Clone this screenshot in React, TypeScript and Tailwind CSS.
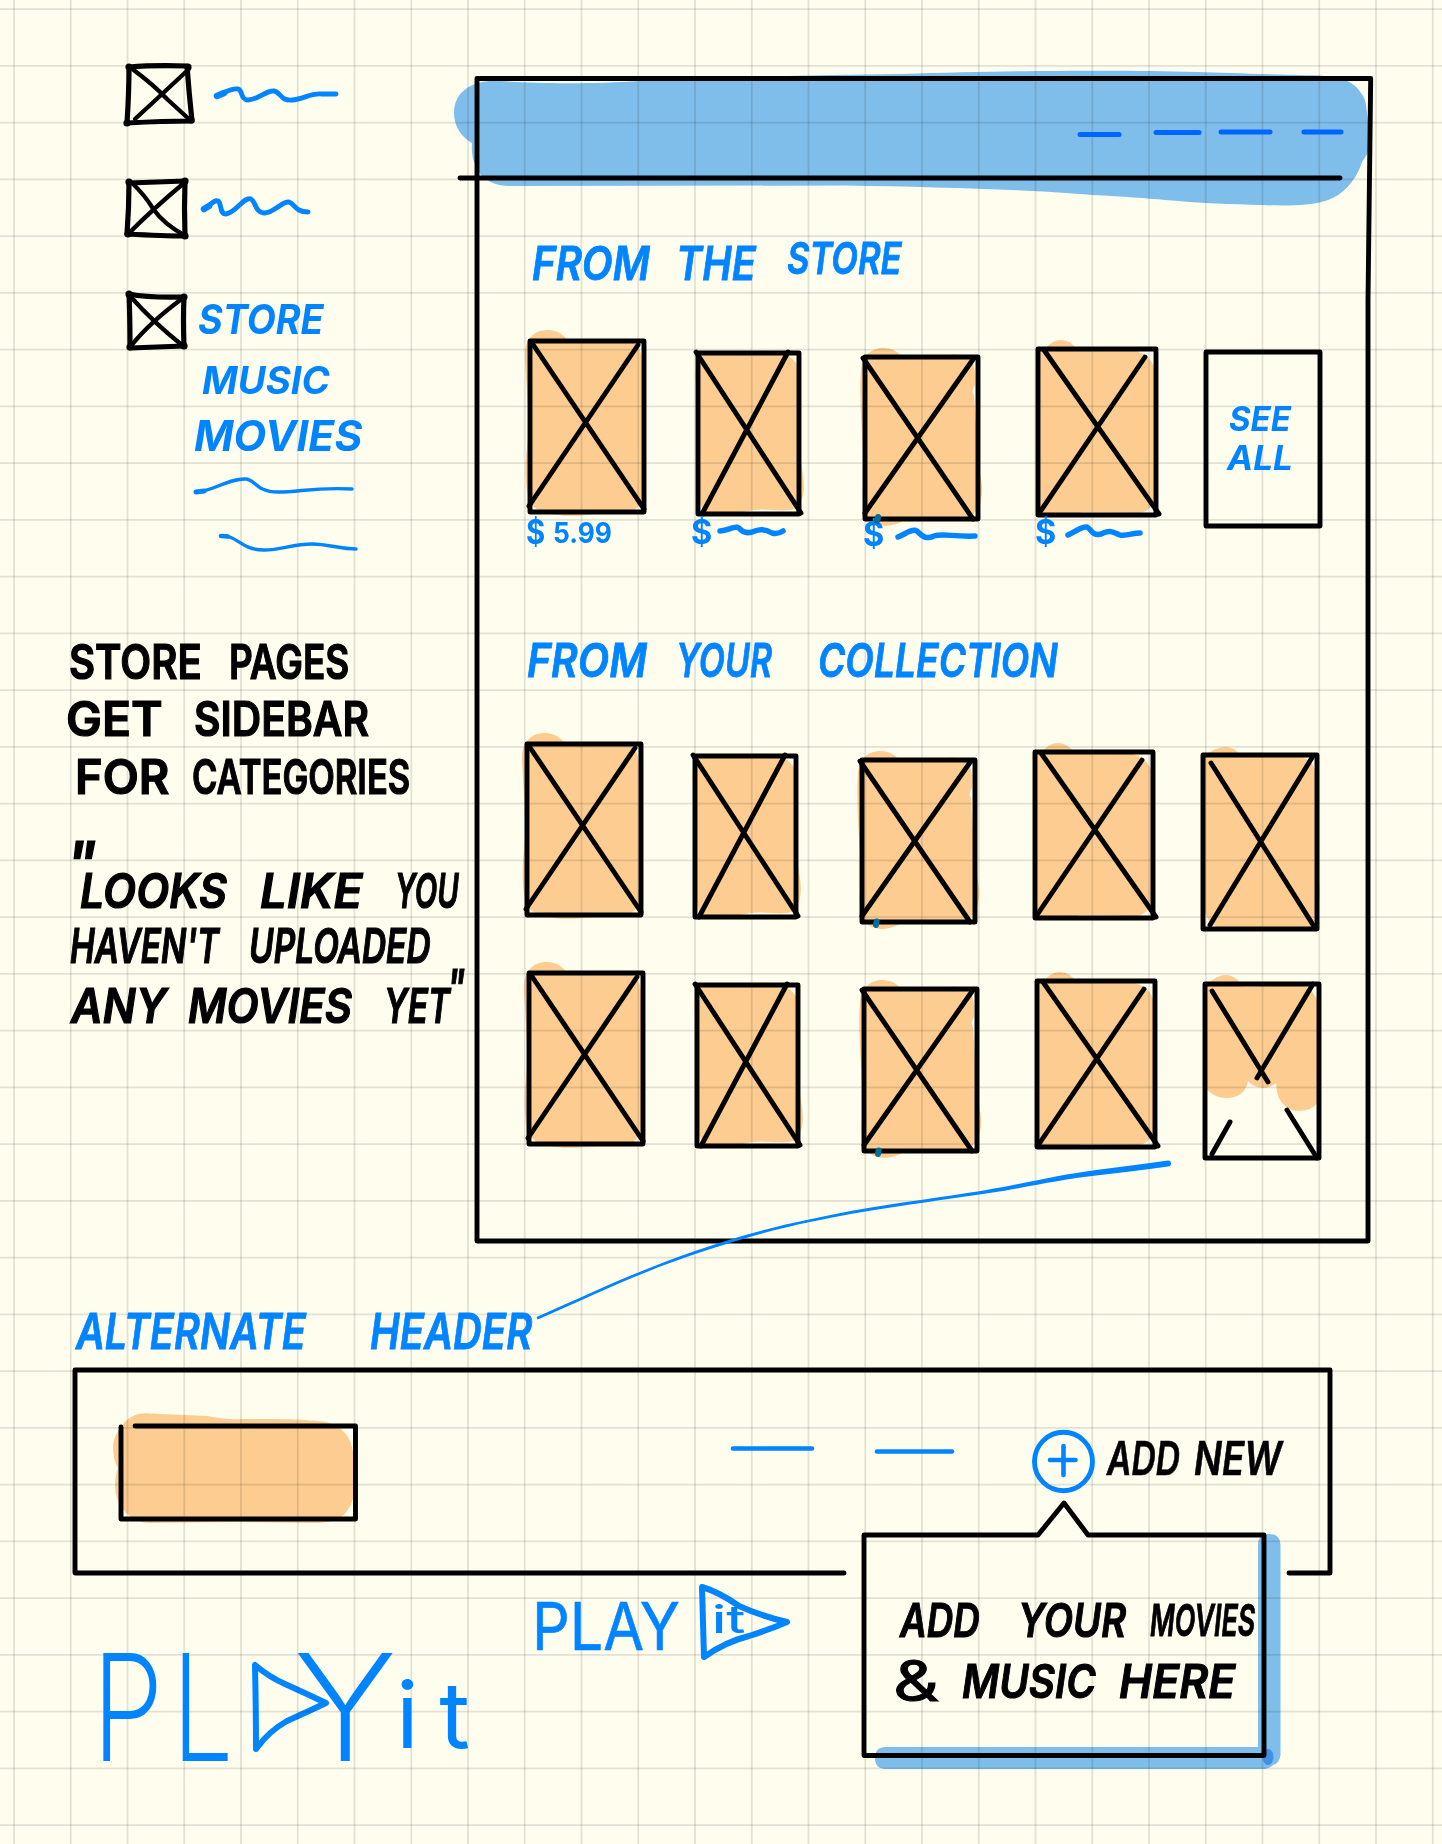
import React, { useLayoutEffect, useRef, useState } from 'react';

/** A handwritten word: the text is stretched to the width of its box. */
function Word({ children, className = '' }: { children: string; className?: string }) {
  const box = useRef<HTMLSpanElement>(null);
  const ink = useRef<HTMLSpanElement>(null);
  const [scale, setScale] = useState(1);
  useLayoutEffect(() => {
    if (box.current && ink.current) setScale(box.current.offsetWidth / ink.current.offsetWidth);
  }, []);
  return (
    <span ref={box} className={'block shrink-0 leading-none ' + className}>
      <span ref={ink} className="inline-block origin-left whitespace-nowrap" style={{ transform: `scaleX(${scale})` }}>
        {children}
      </span>
    </span>
  );
}

function Line({ children, className = '' }: { children: React.ReactNode; className?: string }) {
  return <div className={'flex items-center ' + className}>{children}</div>;
}

/** Round-capped pen strokes. */
function Strokes({ d, w = 4.9, className = 'stroke-black' }: { d: string; w?: number; className?: string }) {
  return <path d={d} fill="none" strokeWidth={w} strokeLinecap="round" strokeLinejoin="round" className={className} />;
}

const BLUE = 'stroke-[#0084ff]';

function GridPaper() {
  return (
    <svg className="pointer-events-none absolute inset-0 h-full w-full" aria-hidden="true">
      {Array.from({ length: 26 }, (_, i) => (
        <line key={i} x1={14 + i * 56.75} x2={14 + i * 56.75} y1={0} y2={1844} stroke="#000" strokeOpacity={0.11} strokeWidth={1.8} />
      ))}
      {Array.from({ length: 33 }, (_, i) => (
        <line key={i} x1={0} x2={1442} y1={9.2 + i * 56.75} y2={9.2 + i * 56.75} stroke="#000" strokeOpacity={0.11} strokeWidth={1.8} />
      ))}
    </svg>
  );
}

const CHECKS = [
  {
    box: 'M5 4Q30 2 63 3Q65 30 68 58Q40 58 3 60Q5 30 5 4Z',
    cross: 'M7 5Q30 22 43 36Q54 46 66 57M65 6Q35 34 11 56',
    dots: [[5, 4], [64, 4], [67, 57], [3, 60]],
  },
  {
    box: 'M5 5Q30 4 61 3Q60 30 61 58Q40 58 3 56Q5 30 5 5Z',
    cross: 'M8 5Q20 16 30 32Q40 46 60 57M60 5Q30 30 4 56',
    dots: [[5, 4], [61, 3], [61, 58], [4, 56]],
  },
  {
    box: 'M5 1Q25 5 60 4Q59 25 60 53Q35 54 6 55Q6 25 5 1Z',
    cross: 'M6 3Q30 30 58 52M59 5Q25 30 7 53',
    dots: [[5, 1], [60, 4], [60, 53], [6, 54]],
  },
];

function Check({ index }: { index: number }) {
  const c = CHECKS[index];
  return (
    <svg width={66} height={56} className="block shrink-0 overflow-visible">
      <Strokes d={c.box} w={5.2} />
      <Strokes d={c.cross} w={4.3} />
      {c.dots.map(([x, y], i) => (
        <circle key={i} cx={x} cy={y} r={3.6} />
      ))}
    </svg>
  );
}

type CardShape = { w: number; h: number; fill: string; cross: string; offset: string };

const CARDS: CardShape[] = [
  {
    w: 114, h: 171, offset: 'mt-0',
    fill: 'M-5 14C-5 -3 5 -11 18 -11C28 -11 34 -6 38 0L102 1Q112 6 112 22L112 158Q109 167 101 171C70 171 48 177 28 174C8 171 0 168 -3 150C-6 125 -3 110 -2 95C-1 60 -5 30 -5 14Z',
    cross: 'M2 2L114 168M108 4L-1 165',
  },
  {
    w: 101, h: 161, offset: 'mt-[12px]',
    fill: 'M0 2L45 0C58 -3 76 -3 86 0Q101 8 103 22L103 110C105 122 107 130 105 142Q102 156 92 157C76 159 66 153 42 160L10 160Q2 158 2 145L0 40Q-5 22 0 2Z',
    cross: 'M-2 -1L103 160M90 -1L4 161',
  },
  {
    w: 113, h: 162, offset: 'mt-[16px]',
    fill: 'M-4 12C-2 -3 8 -9 18 -9C28 -9 33 -5 37 0L75 0Q90 -5 103 0Q112 8 110 28Q106 34 109 38Q112 80 113 110C118 125 119 140 113 152L104 162L42 162Q30 169 20 169Q8 168 3 162Q-4 150 -2 130C0 90 -7 50 -4 12Z',
    cross: 'M-2 1L108 162M109 1L0 156',
  },
  {
    w: 118, h: 166, offset: 'mt-[8px]',
    fill: 'M1 2L7 0Q14 -9 23 -9Q33 -9 39 1L98 2Q112 6 116 18L116 150Q112 164 100 164L45 163Q25 170 12 167L1 164Z',
    cross: 'M6 1L121 165M107 8L2 163',
  },
  {
    w: 114, h: 174, offset: 'mt-[11px]',
    fill: 'M0 2Q12 -8 22 -8Q32 -8 37 0L100 2Q112 8 113 20L114 115Q119 135 115 155Q112 171 104 174L20 174Q2 170 1 150L0 2Z',
    cross: 'M8 8L112 173M110 1L7 170',
  },
];

const PARTIAL: CardShape = {
  ...CARDS[4],
  fill: 'M0 2Q12 -9 20 -9Q30 -9 36 0L40 3L98 1Q110 6 113 20L113 118Q107 127 93 127Q72 125 71 99Q65 104 58 104Q48 103 43 97Q40 114 21 114Q10 114 1 105Z',
  cross: 'M7 7L63 98M108 0L52 94M25 138L7 170M82 126L112 174',
};

function Card({ shape, marked = false }: { shape: CardShape; marked?: boolean }) {
  const { w, h, fill, cross, offset } = shape;
  return (
    <svg width={w} height={h} className={'block overflow-visible ' + offset}>
      <path d={fill} className="fill-[#fcce9b] mix-blend-multiply" />
      <Strokes d={`M0 0H${w}V${h}H0Z`} />
      <Strokes d={cross} />
      {marked && <Strokes d={`M14.5 ${h - 0.5}L14 ${h + 3}`} w={6} className="stroke-[#006f9b]" />}
    </svg>
  );
}

function CardRow({ className, children }: { className: string; children: React.ReactNode }) {
  return (
    <div className={'grid h-[171px] grid-cols-[167.5px_167px_173px_168px_114px] items-start ' + className}>{children}</div>
  );
}

function Price({ squiggle, className = '' }: { squiggle: string; className?: string }) {
  return (
    <div className={'flex h-9 items-center ' + className}>
      <Word className="w-[21px] text-[34px] font-bold">$</Word>
      <svg width={80} height={20} className="block overflow-visible">
        <Strokes d={squiggle} w={5.5} className={BLUE} />
      </svg>
    </div>
  );
}

function Sidebar() {
  return (
    <aside className="h-[1241px] w-[477px] shrink-0 pt-[63px]">
      <Line className="h-14 pl-[124px]">
        <Check index={0} />
        <svg width={130} height={20} className="ml-[22px] block overflow-visible">
          <Strokes d="M5 15C13 12 18 7 26 8C31 9 28 19 36 19C46 19 54 9 62 10C69 11 68 20 80 19C92 18 98 12 110 13H124" className={BLUE} />
          <Strokes d="M5 15L12 12" w={6.5} className={BLUE} />
        </svg>
      </Line>
      <Line className="mt-[59px] h-14 pl-[124px]">
        <Check index={1} />
        <svg width={130} height={24} className="ml-3 block overflow-visible">
          <Strokes d="M2 15C8 12 12 5 16 7C20 9 17 20 24 20C34 19 42 2 49 5C54 8 53 19 63 19C73 18 80 7 87 8C93 10 93 18 106 18" className={BLUE} />
          <Strokes d="M2 15L7 12" w={6.5} className={BLUE} />
        </svg>
      </Line>
      <Line className="mt-[59px] h-14 pl-[124px] text-[#0084ff]">
        <Check index={2} />
        <Word className="-mt-1 ml-[8px] w-[126px] text-[41px] font-bold italic">STORE</Word>
      </Line>
      <Line className="mt-[2px] h-[58px] pl-[202px] text-[#0084ff]">
        <Word className="w-[128px] text-[38px] font-bold italic">MUSIC</Word>
      </Line>
      <Line className="-mt-[2px] h-[58px] pl-[194px] text-[#0084ff]">
        <Word className="w-[168px] text-[42px] font-bold italic">MOVIES</Word>
      </Line>
      <svg width={180} height={80} className="ml-[190px] mt-[9px] block overflow-visible">
        <Strokes d="M6 18C22 18 38 4 56 5C66 6 66 18 88 18C110 18 125 13 162 15" w={3.4} className={BLUE} />
        <Strokes d="M6 18L14 17" w={5} className={BLUE} />
        <Strokes d="M31 62C48 61 50 76 74 76C92 76 102 70 122 70C138 70 150 75 166 75" w={3.4} className={BLUE} />
        <Strokes d="M31 62L38 62.500" w={4.6} className={BLUE} />
      </svg>
      <div className="mt-[79px] text-[48px] font-semibold [-webkit-text-stroke:1.2px_currentColor]">
        <Line className="h-[57.5px] pl-[69px]">
          <Word className="w-[133px]">STORE</Word>
          <Word className="ml-[27px] w-[120px]">PAGES</Word>
        </Line>
        <Line className="h-[57.5px] pl-[66px]">
          <Word className="w-[97px]">GET</Word>
          <Word className="ml-[31px] w-[175px]">SIDEBAR</Word>
        </Line>
        <Line className="h-[57.5px] pl-[75px]">
          <Word className="w-[94px]">FOR</Word>
          <Word className="ml-[23px] w-[218px]">CATEGORIES</Word>
        </Line>
      </div>
      <div className="mt-[57px] text-[48px] font-semibold italic [-webkit-text-stroke:1.2px_currentColor]">
        <Line className="h-[57.5px] pl-[66px]">
          <Word className="-mt-[56px] w-[30px] text-[60px]">"</Word>
          <Word className="-ml-[16px] w-[147px]">LOOKS</Word>
          <Word className="ml-[33px] w-[102px]">LIKE</Word>
          <Word className="ml-[33px] w-[64px]">YOU</Word>
        </Line>
        <Line className="-mt-[3px] h-[57.5px] pl-[70px]">
          <Word className="w-[149px]">HAVEN'T</Word>
          <Word className="ml-[30px] w-[182px]">UPLOADED</Word>
        </Line>
        <Line className="mt-[3px] h-[57.5px] pl-[71px]">
          <Word className="w-[96px]">ANY</Word>
          <Word className="ml-[21px] w-[164px]">MOVIES</Word>
          <Word className="ml-[32px] w-[66px]">YET</Word>
          <Word className="-mt-[38px] -ml-[3px] w-[18px] text-[50px]">"</Word>
        </Line>
      </div>
    </aside>
  );
}

function StorePage() {
  return (
    <main className="relative h-[1241px] w-[893px] shrink-0 pt-[78px] text-[#0084ff]">
      <svg className="absolute inset-0 h-full w-full overflow-visible" aria-hidden="true">
        <path
          className="fill-[#7fbffb] mix-blend-multiply"
          d="M23 81C5 79 -23 86 -23 113C-23 128 -14 138 -5 143C-6 155 -3 165 3 174C10 182 20 186 33 186L370 185.500C460 187 560 190 615 195C680 198 700 202 750 204C790 205 825 208 848 201C868 195 880 178 885 162L891 153L891 120C889 108 890 100 884 93C876 80 864 78 843 75.500C780 74 750 73 720 72C650 70 560 70 423 74C340 75 260 77 163 81C120 84 60 84 23 81Z"
        />
        <Strokes d="M0 78.500H893.700L891 300V1241H0ZM-17 178H863" />
        <Strokes d="M603 134.500H642M679 132.500H722M744 132H793M827 132H864" w={5} className="stroke-[#0066ff]" />
      </svg>
      <header className="h-[100px]" />
      <Line className="mt-[57px] h-14 pl-[55px] text-[46px] font-semibold italic [-webkit-text-stroke:0.8px_currentColor]">
        <Word className="w-[118px]">FROM</Word>
        <Word className="ml-[26px] w-[80px]">THE</Word>
        <Word className="-mt-[10px] ml-[31px] w-[115px] text-[44px]">STORE</Word>
      </Line>
      <CardRow className="mt-[50px] pl-[53px]">
        <Card shape={CARDS[0]} />
        <Card shape={CARDS[1]} />
        <Card shape={CARDS[2]} />
        <Card shape={CARDS[3]} />
        <div className="relative mt-[11px] flex h-[174px] flex-col items-center pt-[50px] pr-[5px] text-[34px] font-bold italic">
          <svg width={114} height={174} className="absolute inset-0 overflow-visible">
            <Strokes d="M0 0H114V174H0Z" />
          </svg>
          <Word className="w-[62px]">SEE</Word>
          <Word className="mt-[5px] w-[66px]">ALL</Word>
        </div>
      </CardRow>
      <div className="relative mt-[2px] grid grid-cols-[165px_172px_172px_168px] pl-[49px]">
        <div className="flex h-9 items-center">
          <Word className="w-[19px] text-[34px] font-bold">$</Word>
          <Word className="ml-[8px] w-[59px] text-[29px] font-bold">5.99</Word>
        </div>
        <Price squiggle="M8 9C17 9 22 3 27 6C31 11 36 12 43 9C50 6 55 8 60 11C64 12 68 11 71 9" />
        <Price className="pt-1" squiggle="M14 13C22 10 28 4 33 7C38 12 42 16 50 12C58 9 70 13 91 12" />
        <Price squiggle="M12 13C20 9 26 4 31 5C36 8 36 14 45 12C55 7 58 11 64 13C72 14 76 11 84 11" />
        <svg width={8} height={10} className="absolute left-[398px] top-0 overflow-visible">
          <Strokes d="M3 3L2 7" w={6} className="stroke-[#006f9b]" />
        </svg>
      </div>
      <Line className="mt-[82px] h-14 pl-[50px] text-[46px] font-semibold italic [-webkit-text-stroke:0.8px_currentColor]">
        <Word className="w-[120px]">FROM</Word>
        <Word className="ml-[29px] w-[96px]">YOUR</Word>
        <Word className="ml-[46px] w-[240px]">COLLECTION</Word>
      </Line>
      <CardRow className="mt-[56px] pl-[50px]">
        {CARDS.map((shape, i) => (
          <Card key={i} shape={shape} marked={i === 2} />
        ))}
      </CardRow>
      <CardRow className="mt-[57.5px] pl-[52px]">
        {CARDS.map((shape, i) => (
          <Card key={i} shape={i === 4 ? PARTIAL : shape} marked={i === 2} />
        ))}
      </CardRow>
      <svg width={640} height={160} className="absolute left-[59px] top-[1162px] overflow-visible">
        <path className="fill-[#0084ff]" d="M0.500 155L1.700 157.500C40 141 75 124 112 109.500C140 98 165 90 189 82.500C215 74 245 66 274 60C302 54 330 49 358 45C397 39 435 34 470 28.500C505 22 530 17 560 13.500Q600 9 632 4.500A2.800 2.800 0 0 0 632 -1.500Q600 3 560 8C530 12 505 17.500 470 24.500C435 31 397 36 357 42C330 46 302 51 273 57.500C245 63 215 71 188 79.500C165 87 140 95 111 107C75 121 40 138 0.500 155Z" />
      </svg>
    </main>
  );
}

function Tooltip() {
  return (
    <div className="absolute left-[789px] top-[165px] h-[221px] w-[400px] pt-[54px] text-[46px] font-semibold italic [-webkit-text-stroke:1px_currentColor]">
      <svg className="absolute inset-0 h-full w-full overflow-visible" aria-hidden="true">
        <path className="fill-[#7fbffb] mix-blend-multiply" d="M394 10Q394 -1 405 -1Q416.500 -1 416.500 10V220Q415 229 409 230Q405 234 398 234H22Q11 234 11 223Q11 212 22 212H394Z" />
        <ellipse cx={404} cy={222} rx={5.5} ry={8} className="fill-[#428fe8]" />
        <Strokes d="M0 0H174L200 -32L224 0H400V220.500H0Z" />
      </svg>
      <Line className="h-[61px] pl-[36px]">
        <Word className="w-[80px]">ADD</Word>
        <Word className="ml-[38px] w-[108px]">YOUR</Word>
        <Word className="ml-[24px] w-[105px] text-[44px]">MOVIES</Word>
      </Line>
      <Line className="h-[61px] pl-[29px]">
        <Word className="w-[46px] text-[56px] font-normal not-italic">&amp;</Word>
        <Word className="ml-[23px] w-[134px]">MUSIC</Word>
        <Word className="ml-[23px] w-[116px]">HERE</Word>
      </Line>
    </div>
  );
}

function AlternateHeader() {
  return (
    <section>
      <Line className="mt-[62px] h-14 pl-[76px] text-[49px] font-semibold italic text-[#0084ff] [-webkit-text-stroke:0.8px_currentColor]">
        <Word className="w-[230px]">ALTERNATE</Word>
        <Word className="ml-[64px] w-[162px]">HEADER</Word>
      </Line>
      <div className="relative ml-[75px] mt-[11px] flex h-[203px] w-[1255px] items-start">
        <svg className="absolute inset-0 h-full w-full overflow-visible" aria-hidden="true">
          <Strokes d="M769 203H0V0H1255V203H1214" />
        </svg>
        <svg width={235} height={93} className="ml-[46px] mt-[56px] block shrink-0 overflow-visible">
          <path className="fill-[#fcce9b] mix-blend-multiply" d="M0 1C6 -8 15 -14 29 -12.500L86 -10Q108 -6 120 -7C160 -7 175 -7 197 -5Q220 -4 229 15Q234 28 233 48Q235 72 228 82Q220 97 195 97L116 96L29 97Q16 97 5 87Q-6 75 -6 60Q-6 50 -3 42Q-8 34 -8 20Q-7 9 0 1Z" />
          <Strokes d="M14 0H234.500V93H0V1" />
        </svg>
        <svg width={230} height={10} className="ml-[373px] mt-[74px] block shrink-0 overflow-visible">
          <Strokes d="M4 4.500H83M148 7.500H223" w={4.600} className={BLUE} />
        </svg>
        <svg width={62} height={62} className="ml-[74px] mt-[61px] block shrink-0 overflow-visible">
          <ellipse cx={30.5} cy={30.5} rx={29} ry={29.2} fill="none" strokeWidth={4.9} className={BLUE} />
          <Strokes d="M17 29H42.500M30.500 15V44" w={4.600} className={BLUE} />
        </svg>
        <Line className="mt-[60px] h-14 pl-[12px] text-[46px] font-semibold italic [-webkit-text-stroke:0.6px_currentColor]">
          <Word className="w-[73px]">ADD</Word>
          <Word className="ml-[14px] w-[88px]">NEW</Word>
        </Line>
        <Tooltip />
      </div>
    </section>
  );
}

function Logos() {
  return (
    <section className="flex h-[200px] items-start pl-[92px] text-[#0084ff]">
      <div className="mt-[66px] flex h-[136px] items-center text-[146px] font-extralight [-webkit-text-stroke:1.8px_currentColor]">
        <Word className="w-[71px]">P</Word>
        <Word className="ml-[9px] w-[61px]">L</Word>
        <svg width={76} height={92} className="ml-[22px] block shrink-0 overflow-visible">
          <Strokes d="M0 4Q1 50 1 88Q14 70 32 60Q52 51 71 42Q50 32 30 23Q14 16 0 4Z" w={6} className={BLUE} />
        </svg>
        <Word className="-ml-[36px] w-[100px]">Y</Word>
        <Word className="ml-px mt-[16px] w-[94px] text-[92px] font-normal tracking-[20px] [-webkit-text-stroke:0]">it</Word>
      </div>
      <Word className="ml-[42px] mt-[20px] w-[148px] text-[66px] font-normal [-webkit-text-stroke:0.6px_currentColor]">PLAY</Word>
      <div className="relative ml-[21px] mt-[13px] h-[74px] w-[88px] pl-[11px] pt-[14px]">
        <svg className="absolute inset-0 h-full w-full overflow-visible" aria-hidden="true">
          <Strokes d="M1 1Q2 40 3 71Q24 56 48 50Q70 43 86 36Q60 30 38 20Q18 6 1 1Z" w={6} className={BLUE} />
        </svg>
        <Word className="w-[34px] text-[38px] font-medium">it</Word>
      </div>
    </section>
  );
}

export default function App() {
  return (
    <div className="relative isolate h-[1844px] w-[1442px] overflow-hidden bg-[#fffdee] font-['Inter','Liberation_Sans',sans-serif] text-black">
      <GridPaper />
      <div className="relative flex">
        <Sidebar />
        <StorePage />
      </div>
      <AlternateHeader />
      <Logos />
    </div>
  );
}
